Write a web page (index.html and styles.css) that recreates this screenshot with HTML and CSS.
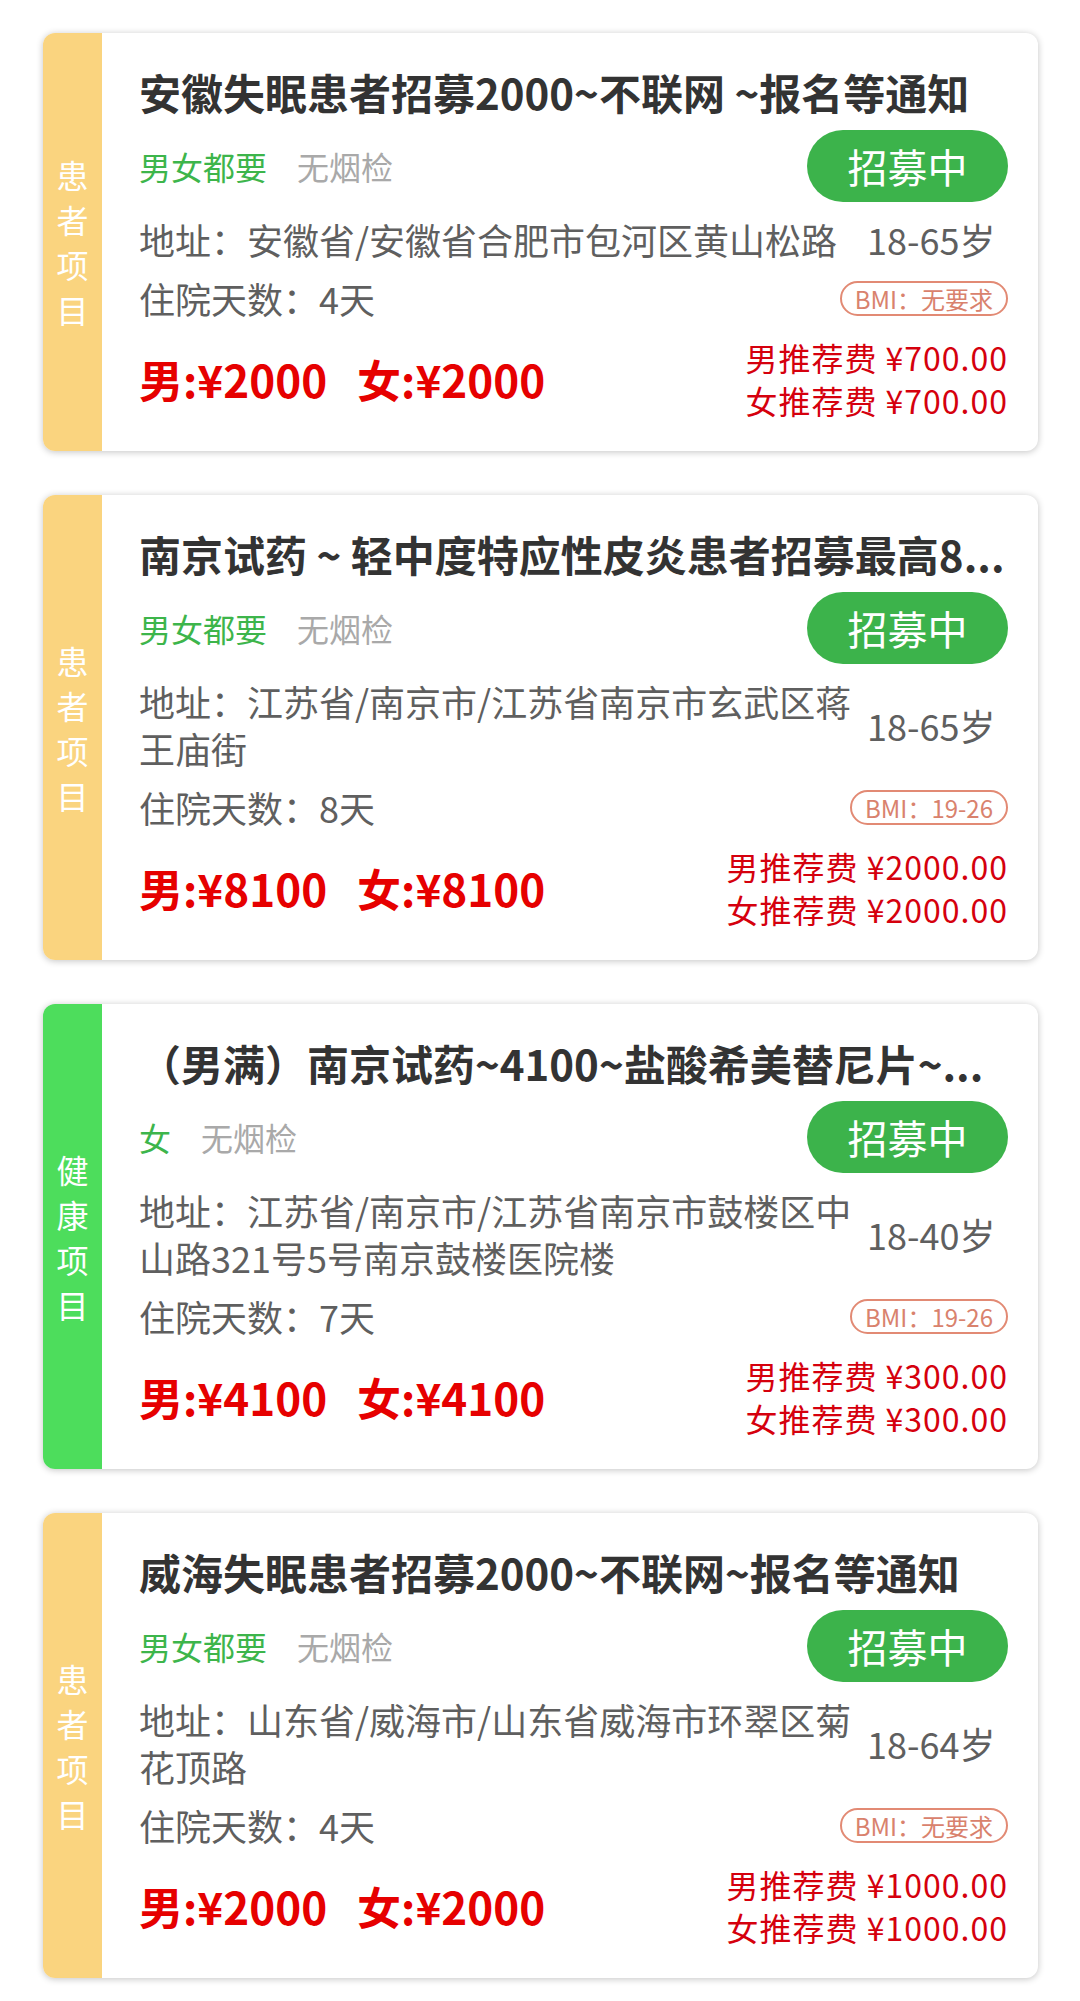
FILE: index.html
```html
<!DOCTYPE html>
<html lang="zh-CN">
<head>
<meta charset="UTF-8">
<meta name="viewport" content="width=device-width, initial-scale=1.0">
<title>项目列表</title>
<link rel="stylesheet" href="styles.css">
</head>
<body>
<div class="list">

    <div class="card">
        <div class="side side-patient"><span>患者项目</span></div>
        <div class="body">
            <div class="title">安徽失眠患者招募2000~不联网 ~报名等通知</div>
            <div class="row tags-row">
                <div class="tags"><span class="sex">男女都要</span><span class="smoke">无烟检</span></div>
                <span class="status">招募中</span>
            </div>
            <div class="row addr-row">
                <div class="addr">地址：安徽省/安徽省合肥市包河区黄山松路</div>
                <div class="age">18-65岁</div>
            </div>
            <div class="row days-row">
                <div class="days">住院天数：4天</div>
                <span class="bmi">BMI：无要求</span>
            </div>
            <div class="row price-row">
                <div class="price"><span>男:¥2000</span><span>女:¥2000</span></div>
                <div class="fee">
                    <div>男推荐费 ¥700.00</div>
                    <div>女推荐费 ¥700.00</div>
                </div>
            </div>
        </div>
    </div>

    <div class="card">
        <div class="side side-patient"><span>患者项目</span></div>
        <div class="body">
            <div class="title">南京试药 ~ 轻中度特应性皮炎患者招募最高8...</div>
            <div class="row tags-row">
                <div class="tags"><span class="sex">男女都要</span><span class="smoke">无烟检</span></div>
                <span class="status">招募中</span>
            </div>
            <div class="row addr-row">
                <div class="addr">地址：江苏省/南京市/江苏省南京市玄武区蒋王庙街</div>
                <div class="age">18-65岁</div>
            </div>
            <div class="row days-row">
                <div class="days">住院天数：8天</div>
                <span class="bmi">BMI：19-26</span>
            </div>
            <div class="row price-row">
                <div class="price"><span>男:¥8100</span><span>女:¥8100</span></div>
                <div class="fee">
                    <div>男推荐费 ¥2000.00</div>
                    <div>女推荐费 ¥2000.00</div>
                </div>
            </div>
        </div>
    </div>

    <div class="card">
        <div class="side side-healthy"><span>健康项目</span></div>
        <div class="body">
            <div class="title">（男满）南京试药~4100~盐酸希美替尼片~...</div>
            <div class="row tags-row">
                <div class="tags"><span class="sex">女</span><span class="smoke">无烟检</span></div>
                <span class="status">招募中</span>
            </div>
            <div class="row addr-row">
                <div class="addr">地址：江苏省/南京市/江苏省南京市鼓楼区中山路321号5号南京鼓楼医院楼</div>
                <div class="age">18-40岁</div>
            </div>
            <div class="row days-row">
                <div class="days">住院天数：7天</div>
                <span class="bmi">BMI：19-26</span>
            </div>
            <div class="row price-row">
                <div class="price"><span>男:¥4100</span><span>女:¥4100</span></div>
                <div class="fee">
                    <div>男推荐费 ¥300.00</div>
                    <div>女推荐费 ¥300.00</div>
                </div>
            </div>
        </div>
    </div>

    <div class="card">
        <div class="side side-patient"><span>患者项目</span></div>
        <div class="body">
            <div class="title">威海失眠患者招募2000~不联网~报名等通知</div>
            <div class="row tags-row">
                <div class="tags"><span class="sex">男女都要</span><span class="smoke">无烟检</span></div>
                <span class="status">招募中</span>
            </div>
            <div class="row addr-row">
                <div class="addr">地址：山东省/威海市/山东省威海市环翠区菊花顶路</div>
                <div class="age">18-64岁</div>
            </div>
            <div class="row days-row">
                <div class="days">住院天数：4天</div>
                <span class="bmi">BMI：无要求</span>
            </div>
            <div class="row price-row">
                <div class="price"><span>男:¥2000</span><span>女:¥2000</span></div>
                <div class="fee">
                    <div>男推荐费 ¥1000.00</div>
                    <div>女推荐费 ¥1000.00</div>
                </div>
            </div>
        </div>
    </div>

</div>
</body>
</html>
```

FILE: styles.css
```css
body {
    margin: 0;
    background-color: #fff;
    font-family: "Noto Sans CJK SC", "Noto Sans", sans-serif;
}
.list {
    padding: 33px 42px 0 43px;
}
.card {
    display: flex;
    margin-bottom: 44px;
    background-color: #fff;
    border-radius: 12px;
    box-shadow: 0 1px 7px rgba(0, 0, 0, 0.24);
    overflow: hidden;
}
.side {
    width: 59px;
    flex-shrink: 0;
    display: flex;
    align-items: center;
    justify-content: center;
}
.side span {
    width: 32px;
    font-size: 32px;
    line-height: 45px;
    color: #fff;
    word-break: break-all;
}
.side-patient {
    background-color: #fad47f; /* yellow */
}
.side-healthy {
    background-color: #4ddd5c; /* green */
}
.body {
    flex: 1;
    min-width: 0;
    padding: 30px 30px 29px 37px;
}
.title {
    font-size: 42px;
    line-height: 57px;
    font-weight: bold;
    color: #333;
    white-space: nowrap;
}
.row {
    display: flex;
    align-items: center;
    justify-content: space-between;
}
.tags-row {
    margin-top: 10px;
}
.tags {
    font-size: 32px;
}
.sex {
    color: #3db54b;
    margin-right: 30px;
}
.smoke {
    color: #a9a9a9;
}
.status {
    width: 201px;
    height: 72px;
    line-height: 72px;
    border-radius: 36px;
    background-color: #3cb34b;
    color: #fff;
    font-size: 40px;
    text-align: center;
}
.addr-row {
    margin-top: 14px;
}
.addr {
    flex: 0 0 728px;
    font-size: 36px;
    line-height: 47px;
    color: #5f5f5f;
}
.age {
    flex: 1;
    padding-right: 16px;
    text-align: right;
    white-space: nowrap;
    font-size: 36px;
    line-height: 47px;
    color: #5f5f5f;
}
.days-row {
    margin-top: 12px;
}
.days {
    font-size: 36px;
    line-height: 47px;
    color: #5f5f5f;
}
.bmi {
    padding: 0 13px;
    height: 31px;
    line-height: 31px;
    border: 2px solid #e28a74;
    border-radius: 18px;
    font-size: 24px;
    color: #d9826d;
}
.price-row {
    margin-top: 14px;
}
.price {
    font-size: 44px;
    font-weight: bold;
    color: #e60000;
}
.price span {
    margin-right: 30px;
}
.fee {
    font-size: 32px;
    line-height: 43px;
    letter-spacing: 1px;
    color: #d5000d;
    text-align: right;
}
```
